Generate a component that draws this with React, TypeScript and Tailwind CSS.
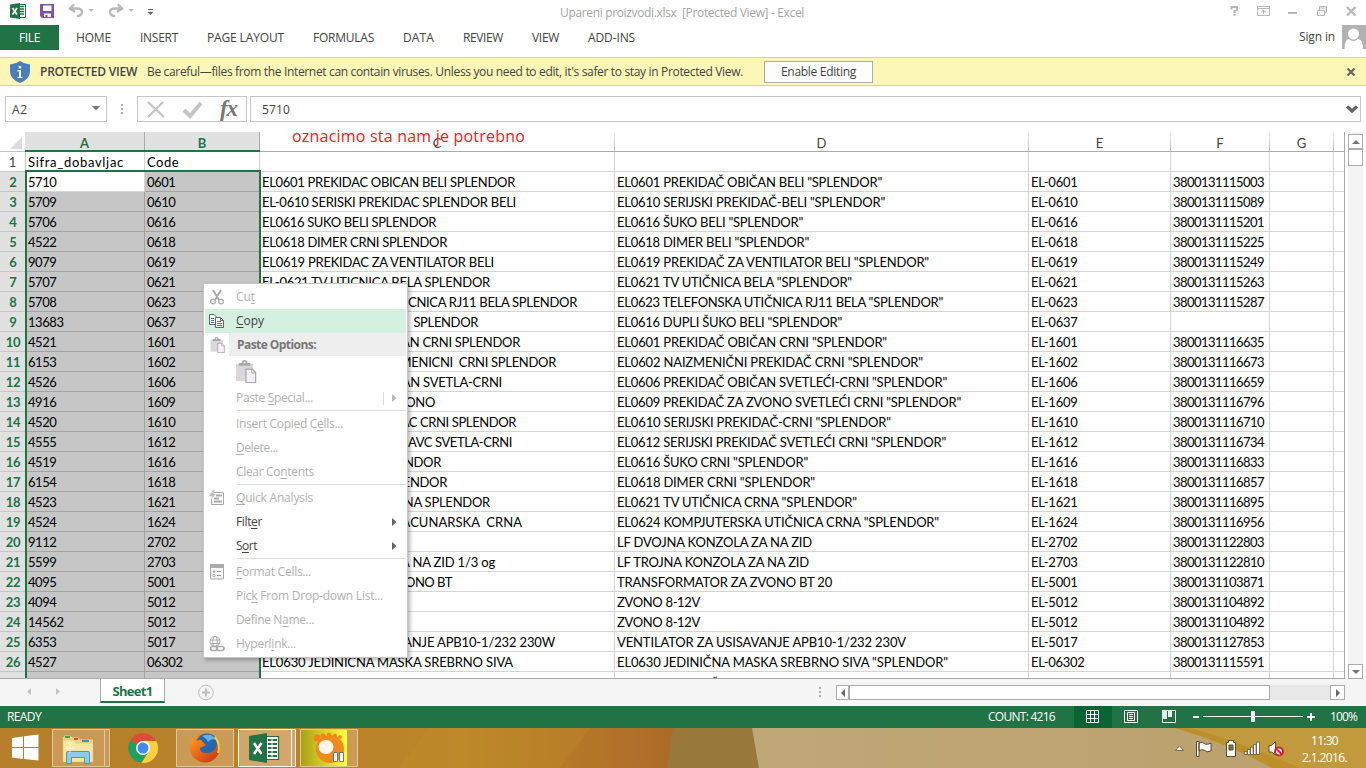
import { useLayoutEffect, useRef, type ReactNode } from 'react';

/** Text whose tracking is adjusted so that it takes exactly `w` pixels. */
function Fit({ w, className = '', children }: { w: number; className?: string; children: ReactNode }) {
  const ref = useRef<HTMLSpanElement>(null);
  useLayoutEffect(() => {
    const el = ref.current;
    if (!el) return;
    el.style.letterSpacing = '0px';
    const n = (el.textContent || '').length;
    const natural = el.getBoundingClientRect().width;
    el.style.letterSpacing = `${(w - natural) / n}px`;
  }, [w]);
  return (
    <span ref={ref} className={`inline-block whitespace-pre ${className}`}>
      {children}
    </span>
  );
}

type Row = [string, string, string, number, string, number, string, string];

const rows: Row[] = [
  ['5710', '0601', 'EL0601 PREKIDAC OBICAN BELI SPLENDOR', 253, 'EL0601 PREKIDAČ OBIČAN BELI "SPLENDOR"', 265, 'EL-0601', '3800131115003'],
  ['5709', '0610', 'EL-0610 SERISKI PREKIDAC SPLENDOR BELI', 254, 'EL0610 SERIJSKI PREKIDAČ-BELI "SPLENDOR"', 268, 'EL-0610', '3800131115089'],
  ['5706', '0616', 'EL0616 SUKO BELI SPLENDOR', 174, 'EL0616 ŠUKO BELI "SPLENDOR"', 186, 'EL-0616', '3800131115201'],
  ['4522', '0618', 'EL0618 DIMER CRNI SPLENDOR', 185, 'EL0618 DIMER BELI "SPLENDOR"', 192, 'EL-0618', '3800131115225'],
  ['9079', '0619', 'EL0619 PREKIDAC ZA VENTILATOR BELI', 232, 'EL0619 PREKIDAČ ZA VENTILATOR BELI "SPLENDOR"', 312, 'EL-0619', '3800131115249'],
  ['5707', '0621', 'EL-0621 TV UTICNICA BELA SPLENDOR', 228, 'EL0621 TV UTIČNICA BELA "SPLENDOR"', 235, 'EL-0621', '3800131115263'],
  ['5708', '0623', 'EL0623 TELEFONSKA UTICNICA RJ11 BELA SPLENDOR', 315, 'EL0623 TELEFONSKA UTIČNICA RJ11 BELA "SPLENDOR"', 326, 'EL-0623', '3800131115287'],
  ['13683', '0637', 'EL0616 DUPLI SUKO BELI  SPLENDOR', 216, 'EL0616 DUPLI ŠUKO BELI "SPLENDOR"', 225, 'EL-0637', ''],
  ['4521', '1601', 'EL0601 PREKIDAC OBICAN CRNI SPLENDOR', 258, 'EL0601 PREKIDAČ OBIČAN CRNI "SPLENDOR"', 270, 'EL-1601', '3800131116635'],
  ['6153', '1602', 'EL0602 PREKIDAC NAIZMENICNI  CRNI SPLENDOR', 294, 'EL0602 NAIZMENIČNI PREKIDAČ CRNI "SPLENDOR"', 306, 'EL-1602', '3800131116673'],
  ['4526', '1606', 'EL0606 PREKIDAC OBICAN SVETLA-CRNI', 240, 'EL0606 PREKIDAČ OBIČAN SVETLEĆI-CRNI "SPLENDOR"', 330, 'EL-1606', '3800131116659'],
  ['4916', '1609', 'EL0609 PREKIDAC ZA ZVONO', 173, 'EL0609 PREKIDAČ ZA ZVONO SVETLEĆI CRNI "SPLENDOR"', 344, 'EL-1609', '3800131116796'],
  ['4520', '1610', 'EL0610 SERIJSKI PREKIDAC CRNI SPLENDOR', 254, 'EL0610 SERIJSKI PREKIDAČ-CRNI "SPLENDOR"', 274, 'EL-1610', '3800131116710'],
  ['4555', '1612', 'EL0612 SERISKI PREKID NAVC SVETLA-CRNI', 250, 'EL0612 SERIJSKI PREKIDAČ SVETLEĆI CRNI "SPLENDOR"', 329, 'EL-1612', '3800131116734'],
  ['4519', '1616', 'EL0616 SUKO CRNI SPLENDOR', 179, 'EL0616 ŠUKO CRNI "SPLENDOR"', 191, 'EL-1616', '3800131116833'],
  ['6154', '1618', 'EL0618 DIMER CRNI SPLENDOR', 185, 'EL0618 DIMER CRNI "SPLENDOR"', 198, 'EL-1618', '3800131116857'],
  ['4523', '1621', 'EL0621 TV UTICNICA CRNA SPLENDOR', 228, 'EL0621 TV UTIČNICA CRNA "SPLENDOR"', 240, 'EL-1621', '3800131116895'],
  ['4524', '1624', 'EL0624 UTICNICA ZA RACUNARSKA  CRNA', 260, 'EL0624 KOMPJUTERSKA UTIČNICA CRNA "SPLENDOR"', 322, 'EL-1624', '3800131116956'],
  ['9112', '2702', 'LF KONZOLA DUPLA', 115, 'LF DVOJNA KONZOLA ZA NA ZID', 195, 'EL-2702', '3800131122803'],
  ['5599', '2703', 'LF KONZOLA TROJNA ZA NA ZID 1/3 og', 233, 'LF TROJNA KONZOLA ZA NA ZID', 192, 'EL-2703', '3800131122810'],
  ['4095', '5001', 'TRANSFORMATOR ZA ZVONO BT', 190, 'TRANSFORMATOR ZA ZVONO BT 20', 215, 'EL-5001', '3800131103871'],
  ['4094', '5012', 'ZVONO 8-12V', 83, 'ZVONO 8-12V', 83, 'EL-5012', '3800131104892'],
  ['14562', '5012', 'ZVONO 8-12V', 83, 'ZVONO 8-12V', 83, 'EL-5012', '3800131104892'],
  ['6353', '5017', 'VENTILATOR ZA USISAVANJE APB10-1/232 230W', 293, 'VENTILATOR ZA USISAVANJE APB10-1/232 230V', 289, 'EL-5017', '3800131127853'],
  ['4527', '06302', 'EL0630 JEDINICNA MASKA SREBRNO SIVA', 251, 'EL0630 JEDINIČNA MASKA SREBRNO SIVA "SPLENDOR"', 331, 'EL-06302', '3800131115591'],
  ['', '', '', 0, 'EL0616 DUPLI ŠUKO SREBRNI "SPLENDOR"', 276, '', ''],
];

const cell = 'h-5 shrink-0 border-r border-b border-[#d4d4d4] pl-[2px] leading-[21px] overflow-hidden whitespace-pre';
const selCell = 'h-5 shrink-0 border-r border-b border-[#a3a3a3] bg-[#c6c6c6] pl-[2px] leading-[21px] overflow-hidden whitespace-pre';

function HeadCell({ label, className }: { label: string; className: string }) {
  return (
    <div className={`flex h-5 shrink-0 border-b border-[#ababab] text-[#444] ${className}`}>
      <span className="flex-1 pt-[2px] text-center leading-[18px]">{label}</span>
      <span className="h-[19px] w-px bg-linear-to-b from-[#f0f0f0] to-[#bdbdbd]" />
    </div>
  );
}

function Sheet() {
  return (
    <div className="relative h-[547px] w-[1345px] overflow-hidden border-r border-b border-[#ababab] font-['Lato','Liberation_Sans',sans-serif] text-[13px] text-black">
      <div className="flex h-5">
        <div className="flex w-[25px] shrink-0 items-end justify-end border-b border-[#c6c6c6] pr-[3px] pb-[2px]">
          <svg width="12" height="12"><path d="M12 0V12H0Z" fill="#dcdcdc" /></svg>
        </div>
        <div className="flex h-5 w-[235px] shrink-0 border-b-2 border-[#217346] bg-[#e1e1e1] font-bold text-[#217346]">
          <span className="w-[120px] border-r border-[#ababab] pt-[2px] text-center leading-[18px]">A</span>
          <span className="flex-1 border-r border-[#ababab] pt-[2px] text-center leading-[18px]">B</span>
        </div>
        <HeadCell label="C" className="w-[355px]" />
        <HeadCell label="D" className="w-[414px]" />
        <HeadCell label="E" className="w-[142px]" />
        <HeadCell label="F" className="w-[99px]" />
        <HeadCell label="G" className="w-[64px]" />
        <HeadCell label="" className="w-[12px]" />
      </div>
      <div className="flex">
        <div className="h-5 w-[26px] shrink-0 border-r border-b border-[#c6c6c6] text-center leading-[21px] text-[#444]">1</div>
        <div className={`${cell} w-[119px]`}><Fit w={96}>Sifra_dobavljac</Fit></div>
        <div className={`${cell} w-[115px]`}><Fit w={32}>Code</Fit></div>
        <div className={`${cell} w-[355px]`} />
        <div className={`${cell} w-[414px]`} />
        <div className={`${cell} w-[142px]`} />
        <div className={`${cell} w-[99px]`} />
        <div className={`${cell} w-[64px]`} />
        <div className={`${cell} w-[12px]`} />
      </div>
      {rows.map((r, i) => (
        <div className="flex" key={i}>
          <div className="h-5 w-[26px] shrink-0 border-b border-[#c6c6c6] bg-[#e1e1e1] text-center leading-[21px] font-bold text-[#217346]">
            {i < 25 && <Fit w={i + 2 > 9 ? 14.5 : 7.5}>{i + 2}</Fit>}
          </div>
          <div className={`${i === 0 ? cell : selCell} w-[119px]`}><Fit w={r[0].length * 7.1}>{r[0]}</Fit></div>
          <div className={`${selCell} w-[115px]`}><Fit w={r[1].length * 7.1}>{r[1]}</Fit></div>
          <div className={`${cell} w-[355px]`}>{r[2] && <Fit w={r[3]}>{r[2]}</Fit>}</div>
          <div className={`${cell} w-[414px] ${i === 25 ? 'pt-[2px]' : ''}`}><Fit w={r[5]}>{r[4]}</Fit></div>
          <div className={`${cell} w-[142px]`}>{r[6] && <Fit w={r[6].length * 7 - 2.5}>{r[6]}</Fit>}</div>
          <div className={`${cell} w-[99px]`}>{r[7] && <Fit w={91}>{r[7]}</Fit>}</div>
          <div className={`${cell} w-[64px]`} />
          <div className={`${cell} w-[12px]`} />
        </div>
      ))}
      <div className="absolute top-[38px] left-[25px] h-[520px] w-[236px] border-2 border-[#217346]" />
    </div>
  );
}

function MenuItem({ pre = '', k = '', post = '', w, icon, arrow, split, on, active }: {
  pre?: string; k?: string; post?: string; w: number; icon?: ReactNode; arrow?: boolean; split?: boolean; on?: boolean; active?: boolean;
}) {
  return (
    <div className={`flex h-6 items-center ${active ? 'bg-[#d3f0e0]' : ''} ${on ? 'text-[#444]' : 'text-[#b1b1b1]'}`}>
      <span className="flex w-[31px] shrink-0 pl-[4px]">{icon}</span>
      <Fit w={w}>{pre}<span className="underline underline-offset-2">{k}</span>{post}</Fit>
      <span className="flex-1" />
      {split && <span className="mr-[8px] h-[13px] w-px bg-[#dcdcdc]" />}
      {arrow && <svg className="mr-[9px]" width="5" height="8"><path d="M0 0L4.500 4L0 8Z" fill={on ? '#666' : '#b8b8b8'} /></svg>}
    </div>
  );
}

const Sep = () => <div className="ml-[32px] h-[2px] border-t border-[#dcdcdc]" />;

function PasteIcon({ size }: { size: number }) {
  return (
    <svg width={size} height={size} viewBox="0 0 22 24">
      <path d="M0 4H18V22H0Z" fill="#dad6da" />
      <path d="M3 6V3H6Q6 0 9 0T12 3H15V6Z" fill="#aaa8aa" />
      <circle cx="9" cy="2.500" r="1" fill="#fff" />
      <path d="M10.500 9.500H17L20.500 13V23.500H10.500Z" fill="#f5f0f7" stroke="#aaa8aa" strokeWidth="1.300" />
      <path d="M16.500 9.500V13.500H20.500" fill="none" stroke="#aaa8aa" />
    </svg>
  );
}

function ContextMenu() {
  return (
    <div className="absolute top-[283px] left-[203px] h-[375px] w-[205px] border border-[#c6c6c6] bg-white px-px pt-px font-['Open_Sans',sans-serif] text-[12px] leading-[16px] shadow-[2px_2px_4px_rgba(0,0,0,0.3)]">
      <MenuItem pre="Cu" k="t" w={19} icon={
        <svg width="16" height="16" viewBox="0 0 16 16" fill="none" stroke="#aaa" strokeWidth="1.300">
          <path d="M4 1L10 11M12 1L6 11" strokeWidth="2" /><circle cx="4" cy="12.500" r="2.300" /><circle cx="12" cy="12.500" r="2.300" />
        </svg>} />
      <MenuItem active on k="C" post="opy" w={28} icon={
        <svg width="16" height="16" viewBox="0 0 16 16" stroke="#666" fill="#fff">
          <path d="M.5 1.500H5L7.500 4V11.500H.5Z" /><path d="M2 5.500H5M2 7.500H5M2 9.500H5" stroke="#3b76bb" />
          <path d="M6.500 4.500H11.500L14.500 7.500V14.500H6.500Z" /><path d="M11.500 4.500V7.500H14.500" fill="none" /><path d="M8 8.500H12M8 10.500H13M8 12.500H13" stroke="#3b76bb" />
        </svg>} />
      <div className="flex h-6 items-start">
        <span className="w-[24px] shrink-0 pt-[4px] pl-[5px]"><PasteIcon size={16} /></span>
        <span className="flex h-[23px] flex-1 items-center bg-[#eee] pl-[8px] font-bold text-[#777]"><Fit w={79}>Paste Options:</Fit></span>
      </div>
      <div className="h-[29px] pt-[3px] pl-[30px]"><PasteIcon size={23} /></div>
      <MenuItem pre="Paste " k="S" post="pecial..." w={77} arrow split />
      <Sep />
      <MenuItem pre="Insert Copied C" k="e" post="lls..." w={107} />
      <MenuItem k="D" post="elete..." w={42} />
      <MenuItem pre="Clear Co" k="n" post="tents" w={78} />
      <Sep />
      <MenuItem k="Q" post="uick Analysis" w={77} icon={
        <svg width="16" height="16" viewBox="0 0 16 16">
          <path d="M4.500 2.500H14.500V14.500H2.500V9" fill="none" stroke="#aaa" /><path d="M4 0L0 6H3L1 10L7 4H4L6 0Z" fill="#c0c0c0" />
          <path d="M7 5.500H13M5 8.500H10M5 11.500H13" stroke="#aaa" strokeWidth="2" />
        </svg>} />
      <MenuItem on pre="Filt" k="e" post="r" w={26} arrow />
      <MenuItem on pre="S" k="o" post="rt" w={21} arrow />
      <Sep />
      <MenuItem k="F" post="ormat Cells..." w={75} icon={
        <svg width="16" height="16" viewBox="0 0 16 16">
          <path d="M1.500 .5H14.500V15H1.500Z" fill="#f7f5f8" stroke="#aaa" /><path d="M1 0H15V4H1Z" fill="#aaa" />
          <circle cx="5" cy="7.500" r="1.300" fill="#aaa" /><circle cx="5" cy="11.500" r="1.200" fill="none" stroke="#aaa" /><path d="M8 7.500H12M8 11.500H12" stroke="#999" />
        </svg>} />
      <MenuItem pre="Pic" k="k" post=" From Drop-down List..." w={147} />
      <MenuItem pre="Define N" k="a" post="me..." w={78} />
      <MenuItem pre="Hyperl" k="i" post="nk..." w={60} icon={
        <svg width="16" height="16" viewBox="0 0 16 16" fill="none" stroke="#aaa">
          <circle cx="6" cy="5.500" r="5" /><ellipse cx="6" cy="5.500" rx="2.200" ry="5" /><path d="M1 4H11M1 7.500H11" />
          <rect x="1.500" y="10.500" width="7" height="4" rx="2" fill="#fff" strokeWidth="1.600" /><rect x="7.500" y="10.500" width="7.500" height="4" rx="2" strokeWidth="1.600" />
        </svg>} />
    </div>
  );
}

function TitleBar() {
  return (
    <div className="flex h-[25px] text-[12px] text-[#a6a6a6]">
      <svg width="500" height="25" viewBox="0 0 500 25">
        <path d="M17 4.500H25.500V17.500H17Z" fill="#fff" stroke="#217346" />
        <path d="M19 6.500H24M19 9H24M19 11.500H24M19 14H24" stroke="#217346" strokeWidth="1.300" />
        <path d="M10 4.500L20 3V19L10 17.500Z" fill="#217346" />
        <path d="M12.500 8L17 14.500M17 8L12.500 14.500" stroke="#fff" strokeWidth="1.700" />
        <path d="M40 4H54V18H42L40 16Z" fill="#8152a8" /><path d="M43 5.500H51.500V11H43Z" fill="#fff" /><path d="M44 13.500H51V17H44Z" fill="#fff" /><path d="M45.500 15H47.500V17H45.500Z" fill="#8152a8" />
        <path d="M74 4.500L70 8.500L75 12M70.500 8.500H77Q82 8.500 82 12T77 16.200" fill="none" stroke="#b8b8b8" strokeWidth="2.300" />
        <path d="M88.500 9H94L91.200 12Z" fill="#b8b8b8" />
        <path d="M118 4.500L122 8.500L117 12M121.500 8.500H115Q110 8.500 110 12T115 16.200" fill="none" stroke="#b8b8b8" strokeWidth="2.300" />
        <path d="M128.500 9H134L131.200 12Z" fill="#b8b8b8" />
        <path d="M148 9.500H153" stroke="#666" /><path d="M147.500 12H153.500L150.500 15Z" fill="#666" />
      </svg>
      <span className="ml-[60px] pt-[5px] leading-[16px]"><Fit w={244}>Upareni proizvodi.xlsx  [Protected View] - Excel</Fit></span>
      <svg className="ml-auto" width="146" height="25" viewBox="1220 0 146 25" fill="none" stroke="#b8b8b8">
        <path d="M1231.500 9.500V7H1237V10L1234.500 11V13M1234.500 14V16" strokeWidth="2" />
        <path d="M1257.500 6.500H1269.500V15.500H1257.500ZM1257.500 8.500H1269.500M1263.500 14V10.500M1261 12.500L1263.500 10.500L1266 12.500" />
        <path d="M1288 13H1297" strokeWidth="2" />
        <path d="M1317.500 10.500H1324.500V15.500H1317.500ZM1319.500 10V6.500H1326.500V12.500H1325M1319.500 8H1326.500" />
        <path d="M1347 7L1355.500 15.500M1355.500 7L1347 15.500" strokeWidth="2.300" />
      </svg>
    </div>
  );
}

const tabs: [string, number, string][] = [
  ['HOME', 35, 'ml-[17px]'], ['INSERT', 38, 'ml-[29px]'], ['PAGE LAYOUT', 77, 'ml-[29px]'], ['FORMULAS', 61, 'ml-[29px]'],
  ['DATA', 31, 'ml-[29px]'], ['REVIEW', 40, 'ml-[29px]'], ['VIEW', 27, 'ml-[29px]'], ['ADD-INS', 47, 'ml-[29px]'],
];

function Ribbon() {
  return (
    <div className="flex h-[32px] items-start text-[12px] text-[#444]">
      <div className="flex h-[25px] w-[59px] items-center justify-center bg-[#217346] text-white"><Fit w={21}>FILE</Fit></div>
      {tabs.map(([t, w, m]) => <span key={t} className={`${m} leading-[25px]`}><Fit w={w}>{t}</Fit></span>)}
      <span className="mr-[7px] ml-auto leading-[24px]"><Fit w={36}>Sign in</Fit></span>
      <svg width="24" height="24"><path d="M0 0H24V24H0Z" fill="#b2b2b2" /><circle cx="11.500" cy="9" r="5.500" fill="#fff" /><path d="M2.500 24Q2.500 14.500 7 14Q11.500 18 16 14Q21 14.500 21 24Z" fill="#fff" /></svg>
    </div>
  );
}

function MessageBar() {
  return (
    <div className="flex h-[29px] items-center border-y border-[#d9d58e] bg-[#fcf7b6] text-[12px] text-[#444]">
      <svg className="ml-[10px]" width="20" height="22"><path d="M10 0Q14 3 20 3.500V10Q20 18 10 22Q0 18 0 10V3.500Q6 3 10 0Z" fill="#4a7ebb" /><path d="M8.800 5H11.200V7.500H8.800ZM7.500 9H11V16H12.500V17H7.500V16H9V10.500H7.500Z" fill="#fff" /></svg>
      <span className="ml-[10px] font-semibold"><Fit w={97}>PROTECTED VIEW</Fit></span>
      <span className="ml-[10px]"><Fit w={596}>Be careful—files from the Internet can contain viruses. Unless you need to edit, it's safer to stay in Protected View.</Fit></span>
      <span className="ml-[21px] flex h-[22px] w-[109px] items-center justify-center border border-[#ababab] bg-[#fdfdfd]"><Fit w={75}>Enable Editing</Fit></span>
      <svg className="mr-[11px] ml-auto" width="8" height="8"><path d="M.5.5L7.500 7.500M7.500.5L.5 7.500" stroke="#666" strokeWidth="2.200" /></svg>
    </div>
  );
}

function FormulaBar() {
  return (
    <div className="flex h-[46px] pt-[10px] pl-[5px] text-[12px] text-[#444]">
      <div className="flex h-[26px] w-[102px] items-center border border-[#c6c6c6] pt-px pr-[6px] pl-[6px]">
        <Fit w={16}>A2</Fit>
        <svg className="-mt-[3px] ml-auto" width="8" height="5"><path d="M0 0H8L4 4.500Z" fill="#777" /></svg>
      </div>
      <svg className="mx-[14px]" width="2" height="26"><path d="M0 8H2V10H0ZM0 12H2V14H0ZM0 16H2V18H0Z" fill="#b0b0b0" /></svg>
      <div className="flex h-[26px] w-[110px] items-center border border-[#c6c6c6]">
        <svg width="72" height="24" fill="none" stroke="#c4c4c4"><path d="M10 5L26 20M25 5L10 20" strokeWidth="2.300" /><path d="M46 13L52 19L63 6" strokeWidth="4" /></svg>
        <span className="ml-[10px] font-['Liberation_Serif',serif] text-[23px] leading-[22px] font-bold text-[#777] italic"><Fit w={17}>fx</Fit></span>
      </div>
      <div className="ml-[3px] flex h-[26px] w-[1111px] items-center border border-[#c6c6c6] pt-px pr-[2px] pl-[11px]">
        <Fit w={28}>5710</Fit>
        <svg className="ml-auto" width="12" height="9"><path d="M1 1.500L6 6L11 1.500" fill="none" stroke="#666" strokeWidth="3.200" /></svg>
      </div>
    </div>
  );
}

function VScroll() {
  return (
    <div className="ml-[3px] flex h-[547px] w-[15px] flex-col bg-[#f3f3f3] pt-[2px]">
      <div className="flex h-[15px] items-center justify-center border border-[#ababab] bg-white"><svg width="8" height="4"><path d="M0 4L4 0L8 4Z" fill="#777" /></svg></div>
      <div className="h-[17px] border border-[#ababab] bg-white" />
      <div className="mt-auto flex h-[15px] items-center justify-center border border-[#ababab] bg-white"><svg width="8" height="4"><path d="M0 0L4 4L8 0Z" fill="#777" /></svg></div>
    </div>
  );
}

function SheetTabs() {
  return (
    <div className="flex h-[27px] bg-[#f5f5f5]">
      <svg width="100" height="27"><path d="M31 9V16L27 12.500ZM56 9V16L60 12.500Z" fill="#c2c2c2" /></svg>
      <div className="-mt-px flex h-[25px] w-[65px] items-center justify-center border-x border-b-2 border-x-[#ababab] border-b-[#217346] bg-white pt-[4px] text-[13px] font-bold text-[#217346]"><Fit w={40}>Sheet1</Fit></div>
      <svg className="ml-[33px]" width="17" height="25" fill="none" stroke="#bdbdbd"><circle cx="8" cy="13.500" r="7.300" /><path d="M8 9.500V17.500M4 13.500H12" strokeWidth="2" /></svg>
      <svg className="ml-[604px]" width="2" height="27"><path d="M0 8H2V10H0ZM0 12H2V14H0ZM0 16H2V18H0Z" fill="#b0b0b0" /></svg>
      <div className="mt-[6px] ml-[15px] flex h-[15px] w-[509px] bg-[#e8e8e8]">
        <span className="flex w-[14px] items-center justify-center border border-r-2 border-[#ababab] bg-white"><svg width="4" height="8"><path d="M4 0V8L0 4Z" fill="#666" /></svg></span>
        <span className="w-[420px] border border-l-0 border-[#ababab] bg-white" />
        <span className="ml-auto flex w-[15px] items-center justify-center border border-[#ababab] bg-white"><svg width="4" height="8"><path d="M0 0V8L4 4Z" fill="#666" /></svg></span>
      </div>
    </div>
  );
}

function StatusBar() {
  return (
    <div className="flex h-[22px] items-center bg-[#217346] text-[12px] text-white">
      <span className="ml-[7px]"><Fit w={34}>READY</Fit></span>
      <span className="ml-auto"><Fit w={67}>COUNT: 4216</Fit></span>
      <svg className="ml-[19px]" width="241" height="22" viewBox="1074 0 241 22" fill="none" stroke="#fff">
        <path d="M1074 0H1112V22H1074Z" fill="#0a6332" stroke="none" />
        <path d="M1086.500 4.500H1098.500V16.500H1086.500ZM1090.500 4.500V16.500M1094.500 4.500V16.500M1086.500 8.500H1098.500M1086.500 12.500H1098.500" />
        <path d="M1124.500 4.500H1137.500V16.500H1124.500ZM1127.500 6.500H1134.500V14.500H1127.500ZM1129 8.500H1133M1129 10.500H1133M1129 12.500H1133" />
        <path d="M1162.500 4.500H1175.500V16.500H1162.500Z" /><path d="M1162 4H1167V13H1162ZM1168 4H1172V11H1168Z" fill="#e8f2ec" stroke="none" />
        <path d="M1193 11H1199M1307 11H1315M1311 7V15" strokeWidth="2" /><path d="M1203 10.500H1303" /><path d="M1251 5H1255V16H1251Z" fill="#fff" stroke="none" />
      </svg>
      <span className="mr-[9px] ml-[15px]"><Fit w={27}>100%</Fit></span>
    </div>
  );
}

function Taskbar() {
  return (
    <div className="flex h-[40px] overflow-hidden">
      <svg width="1366" height="40" className="shrink-0">
        <defs>
          <linearGradient id="base" x1="0" x2="1"><stop offset="0" stopColor="#b57f2b" /><stop offset=".25" stopColor="#ba822a" /><stop offset=".34" stopColor="#be8629" /><stop offset=".5" stopColor="#ab6a28" /></linearGradient>
          <linearGradient id="tan" x1="0" x2="1"><stop offset="0" stopColor="#bfa777" /><stop offset="1" stopColor="#bba06c" /></linearGradient>
          <linearGradient id="yel" x1="0" x2="1"><stop offset="0" stopColor="#aaa018" /><stop offset="1" stopColor="#ffff3d" /></linearGradient>
          <linearGradient id="fox" x1="0" y1="0" x2="1" y2="1"><stop offset="0" stopColor="#f7a21e" /><stop offset=".5" stopColor="#e8641c" /><stop offset="1" stopColor="#bd3212" /></linearGradient>
          <radialGradient id="ball" cx=".35" cy=".35"><stop offset="0" stopColor="#fff" /><stop offset=".4" stopColor="#fff1e0" /><stop offset=".52" stopColor="#fb9a22" /><stop offset="1" stopColor="#e06a00" /></radialGradient>
        </defs>
        <path d="M0 0H1366V40H0Z" fill="url(#base)" />
        <path d="M430 0L398 40H560L590 0Z" fill="#c58f2b" opacity=".25" />
        <path d="M673 0L667 40H762L752 0Z" fill="#98793b" />
        <path d="M752 0L759 40H1366V0Z" fill="url(#tan)" />
        <path d="M1175 0Q1230 16 1272 40H1366V0Z" fill="#c09a3c" /><path d="M1175 0Q1230 16 1272 40H1300Q1240 14 1190 0Z" fill="#bd8f2b" />
        <path d="M12 10L23 8.500V19H12ZM24 8.200L38.500 6.500V19H24ZM12 20H23V31L12 29.500ZM24 20H38.500V32.500L24 31Z" fill="#fff" />
        <g stroke="#e0c79c" fill="#dfbb8c" fillOpacity=".45">
          <path d="M52.500 1.500H104.500V38.500H52.500ZM104.500 1.500H109.500V38.500H104.500Z" />
          <path d="M176.500 1.500H233.500V38.500H176.500Z" />
          <path d="M238.500 1.500H291.500V38.500H238.500ZM291.500 1.500H295.500V38.500H291.500Z" stroke="#fff" fillOpacity=".65" />
          <path d="M300.500 1.500H357.500V38.500H300.500Z" />
        </g>
        <g>
          <path d="M63 9.500L65 7.500H70L72 9.500H78L80 11.500H93V33H63Z" fill="#efd684" /><path d="M65 8H70V10H65Z" fill="#32a843" /><path d="M74 10H78V12H74Z" fill="#d84a32" /><path d="M82 12H89V14H82Z" fill="#3c8ed0" />
          <path d="M63 12H74L76 15H93V34H63Z" fill="#f7e6a2" stroke="#dcc070" strokeWidth=".6" /><path d="M66.500 35.500V25Q66.500 23.500 68 23.500H88Q89.500 23.500 89.500 25V35.500H84.500V29.500H71.500V35.500Z" fill="#8ecbe8" stroke="#4f96bd" />
          <path d="M70 14V25M65 20L75 20" stroke="#fff" strokeOpacity=".7" />
        </g>
        <g>
          <path d="M143 20L130.200 12.500A15 15 0 0 1 156 12.500H143Z" fill="#dd4b3c" /><path d="M143 20L130.200 12.500A15 15 0 0 0 141 34.800L149.500 23Z" fill="#1fa15d" /><path d="M143 20L149 23L141.500 34.900A15 15 0 0 0 156.300 13H143Z" fill="#fecd40" />
          <circle cx="143" cy="20" r="7" fill="#fff" /><circle cx="143" cy="20" r="5.500" fill="#4587f3" />
        </g>
        <g>
          <circle cx="205" cy="20" r="14.500" fill="url(#fox)" /><circle cx="207" cy="16.500" r="11" fill="#2467ad" /><path d="M202 8Q212 4 216 12Q211 10 208 14Q206 10 202 8Z" fill="#62b4e0" />
          <path d="M192 10L197 13Q201 10 203 14L206 17L200 20Q200 25 206 25Q212 26 216 20Q218 14 215 9Q222 18 218 26Q212 35 203 34Q190 31 190 20Q190 14 192 10Z" fill="url(#fox)" /><path d="M215 9Q221 17 218 25" fill="none" stroke="#fbd23c" strokeWidth="2" />
        </g>
        <g>
          <path d="M266 8.500H278.500V31.500H266Z" fill="#fff" stroke="#217346" strokeWidth="1.200" /><path d="M268 12H277M268 16H277M268 20H277M268 24H277M268 28H277" stroke="#217346" strokeWidth="1.800" /><path d="M272 10V30" stroke="#fff" />
          <path d="M249 8L267 5V35L249 32Z" fill="#217346" /><path d="M254 15L261.500 26M261.500 15L254 26" stroke="#fff" strokeWidth="2.500" />
        </g>
        <path d="M301 2H347V38H301Z" fill="url(#yel)" />
        <circle cx="330" cy="21" r="14" fill="#f08a1c" /><ellipse cx="326" cy="19" rx="7.500" ry="7" fill="#fff6ea" /><g fill="#f48414"><circle cx="317" cy="10" r="3.500" /><circle cx="323" cy="8" r="2.500" /><circle cx="329" cy="7" r="2.200" /><circle cx="335" cy="7.500" r="2" /><circle cx="340" cy="9" r="1.800" /></g>
        <path d="M333.500 24.500H337.500V33.500H333.500ZM339.500 24.500H343.500V33.500H339.500Z" fill="#fff" stroke="#777" />
        <g stroke="#5a4a2c" fill="#fff">
          <path d="M1175.500 22.500L1179.500 18L1183.500 22.500Z" strokeWidth=".7" />
          <path d="M1196.500 13.500H1199V28.500H1196.500ZM1199 15Q1203 13 1205 16Q1208 17 1211 15V23Q1207 25 1204 22Q1202 21 1199 23Z" />
          <path d="M1228.500 12.500H1233.500V14.500H1235.500V28.500H1226.500V14.500H1228.500Z" /><path d="M1229 17H1233V22H1229Z" fill="#8a6c2c" />
          <path d="M1244.500 23.500H1247V26.500H1244.500ZM1247.500 21.500H1250V26.500H1247.500ZM1250.500 19H1253V26.500H1250.500ZM1253.500 16.500H1256V26.500H1253.500ZM1256.500 14H1259.500V26.500H1256.500Z" strokeWidth=".7" />
          <path d="M1269 17.500H1271.500L1275.500 13.500V27L1271.500 24H1269Z" />
        </g>
        <circle cx="1279" cy="23.500" r="4" fill="#fff" stroke="#d9202a" strokeWidth="2" /><path d="M1276.500 21L1281.500 26" stroke="#d9202a" strokeWidth="2" />
      </svg>
      <div className="-ml-[70px] w-[57px] shrink-0 pt-[4px] text-center text-[12px] leading-[17px] text-white">
        <Fit w={27}>11:30</Fit><br /><Fit w={45}>2.1.2016.</Fit>
      </div>
    </div>
  );
}

export default function App() {
  return (
    <div className="relative h-[768px] w-[1366px] overflow-hidden bg-white font-['Open_Sans','Noto_Sans',sans-serif]">
      <TitleBar />
      <Ribbon />
      <MessageBar />
      <FormulaBar />
      <div className="flex h-[547px]">
        <Sheet />
        <VScroll />
      </div>
      <SheetTabs />
      <StatusBar />
      <Taskbar />
      <div className="absolute top-[124px] left-[292px] text-[16px] leading-[24px] text-[#ed1c24]">
        <Fit w={233}>oznacimo sta nam je potrebno</Fit>
      </div>
      <ContextMenu />
    </div>
  );
}
